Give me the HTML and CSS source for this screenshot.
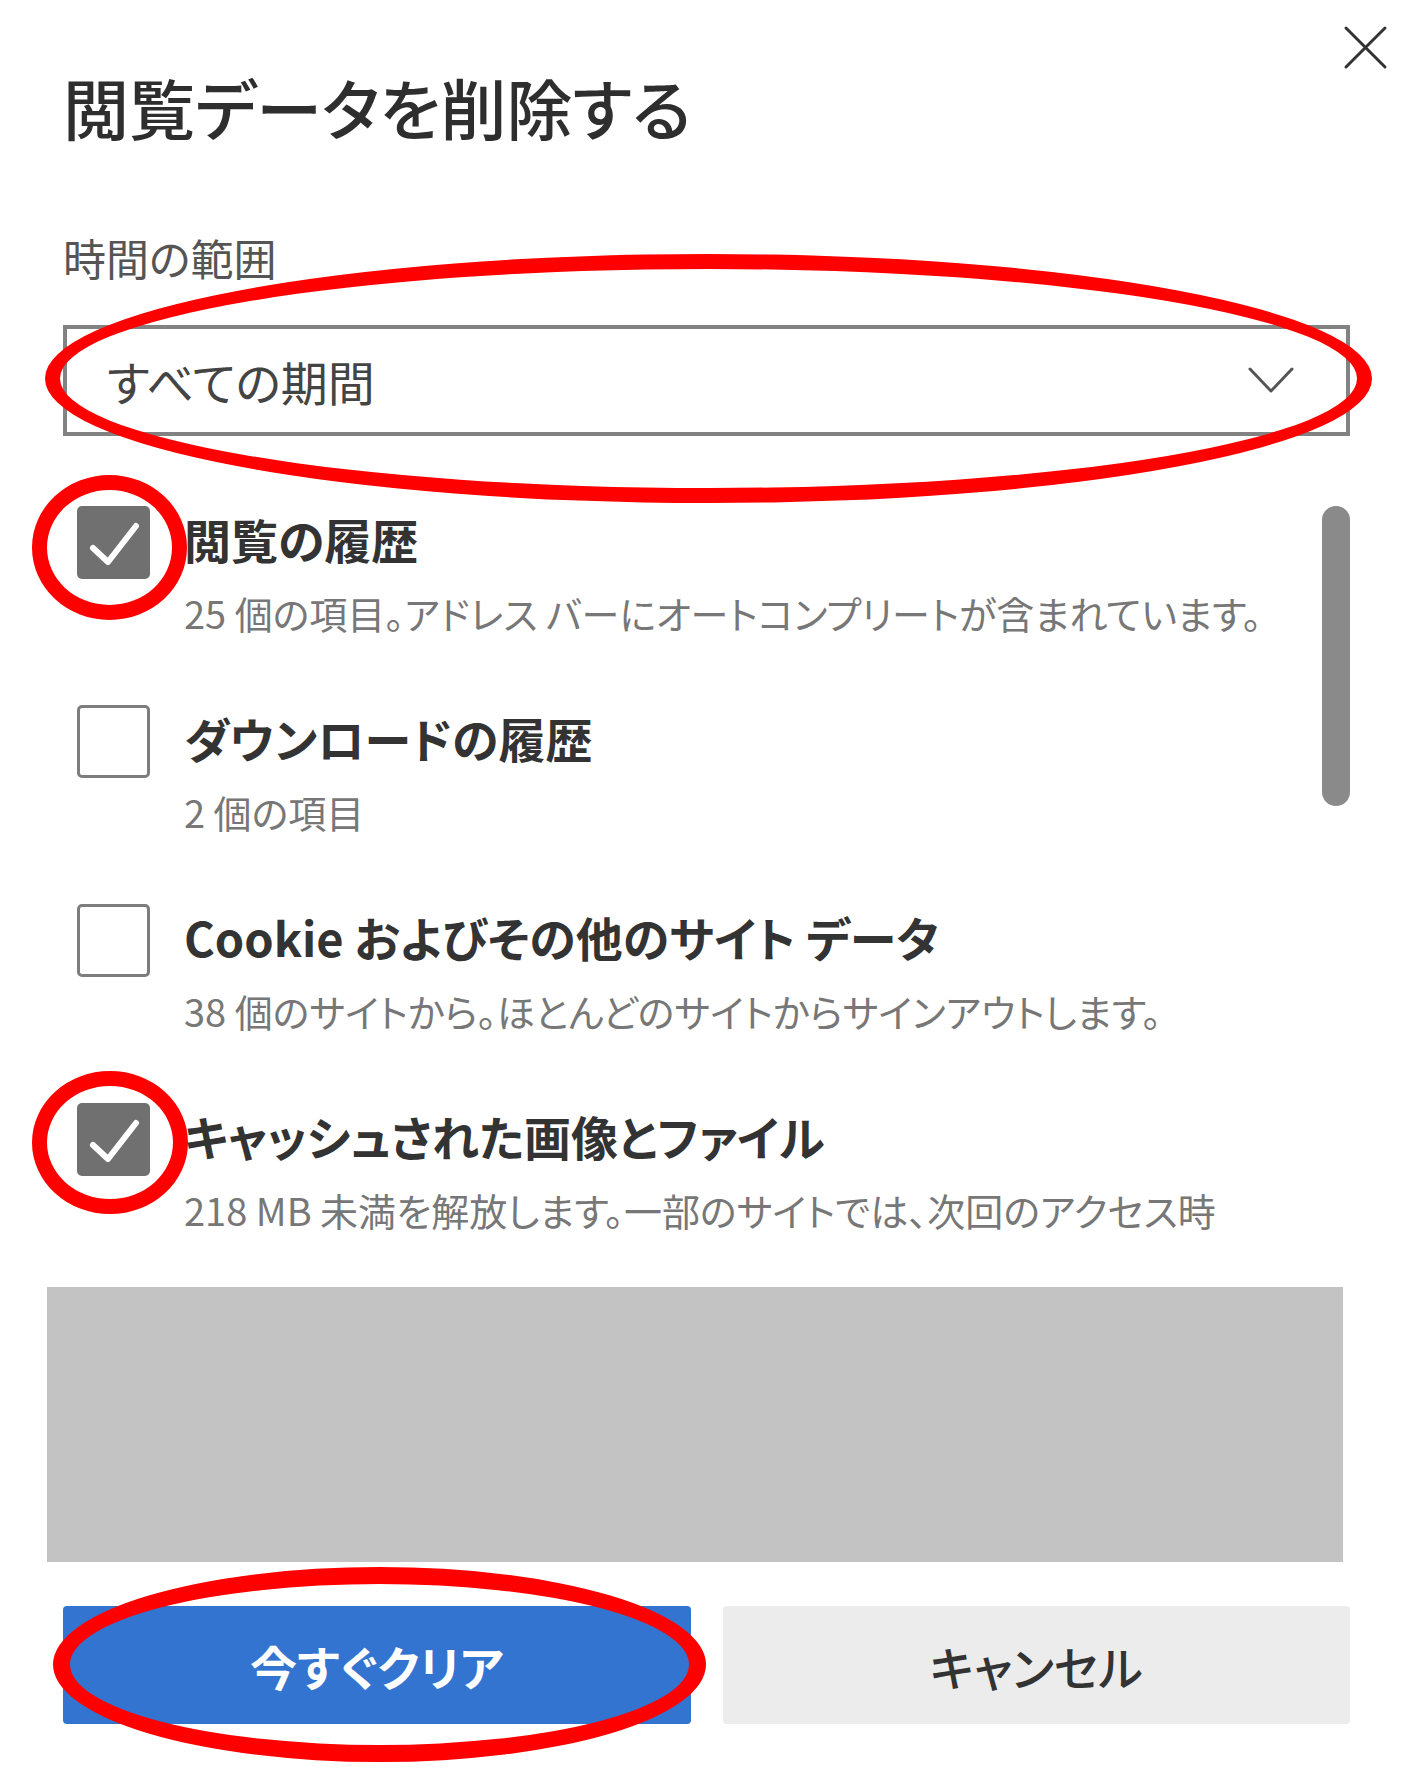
FILE: index.html
```html
<!DOCTYPE html>
<html lang="ja">
<head>
<meta charset="utf-8">
<title>閲覧データを削除する</title>
<link rel="stylesheet" href="styles.css">
</head>
<body>
<div class="dialog">
  <header class="header">
    <h1 class="title">閲覧データを削除する</h1>
    <button class="close" aria-label="閉じる">
      <svg viewBox="0 0 45 45" width="45" height="45"><path d="M3 3 L42 42 M42 3 L3 42" stroke="#333" stroke-width="3" fill="none" stroke-linecap="round"/></svg>
    </button>
  </header>

  <div class="label">時間の範囲</div>
  <div class="select">
    <span class="select-text">すべての期間</span>
    <svg class="chevron" viewBox="0 0 46 27" width="46" height="27"><path d="M2 2 L23 24 L44 2" stroke="#555" stroke-width="3" fill="none" stroke-linecap="round" stroke-linejoin="round"/></svg>
  </div>

  <div class="scroll-area">
    <div class="items">
      <div class="item">
        <span class="cb checked"><svg viewBox="0 0 73 73" width="73" height="73"><path d="M16 42 L31 56 L59 20" stroke="#fff" stroke-width="6" fill="none" stroke-linecap="round" stroke-linejoin="round"/></svg></span>
        <div class="item-text">
          <div class="item-title">閲覧の履歴</div>
          <div class="item-desc">25 個の項目。アドレス バーにオートコンプリートが含まれています。</div>
        </div>
      </div>
      <div class="item">
        <span class="cb"></span>
        <div class="item-text">
          <div class="item-title">ダウンロードの履歴</div>
          <div class="item-desc">2 個の項目</div>
        </div>
      </div>
      <div class="item">
        <span class="cb"></span>
        <div class="item-text">
          <div class="item-title">Cookie およびその他のサイト データ</div>
          <div class="item-desc">38 個のサイトから。ほとんどのサイトからサインアウトします。</div>
        </div>
      </div>
      <div class="item">
        <span class="cb checked"><svg viewBox="0 0 73 73" width="73" height="73"><path d="M16 42 L31 56 L59 20" stroke="#fff" stroke-width="6" fill="none" stroke-linecap="round" stroke-linejoin="round"/></svg></span>
        <div class="item-text">
          <div class="item-title">キャッシュされた画像とファイル</div>
          <div class="item-desc">218 MB 未満を解放します。一部のサイトでは、次回のアクセス時</div>
        </div>
      </div>
    </div>
    <div class="scrollbar"><div class="thumb"></div></div>
  </div>

  <div class="gray-block"></div>

  <div class="actions">
    <button class="btn primary">今すぐクリア</button>
    <button class="btn secondary">キャンセル</button>
  </div>
</div>

<div class="mark mark-select"></div>
<div class="mark mark-cb1"></div>
<div class="mark mark-cb4"></div>
<div class="mark mark-btn"></div>
</body>
</html>
```

FILE: styles.css
```css
* { box-sizing: border-box; }

html, body {
  margin: 0;
  padding: 0;
  background: #ffffff;
}

body {
  position: relative;
  width: 1420px;
  height: 1782px;
  overflow: hidden;
  font-family: "Noto Sans CJK JP", "Noto Sans", sans-serif;
  font-feature-settings: "palt";
  color: #333;
}

.dialog {
  padding: 25px 70px 0 63px;
}

.header {
  display: flex;
  justify-content: space-between;
  align-items: flex-start;
}

.title {
  margin: 38px 0 0 0;
  font-size: 66px;
  line-height: 86px;
  font-weight: 500;
  color: #2e2e2e;
}

.close {
  margin: 0 -38px 0 0;
  padding: 0;
  width: 45px;
  height: 45px;
  border: 0;
  background: transparent;
  display: flex;
}

.label {
  margin-top: 80px;
  font-size: 43px;
  line-height: 56px;
  color: #555;
}

.select {
  margin-top: 40px;
  height: 111px;
  border: 4px solid #828282;
  display: flex;
  align-items: center;
  justify-content: space-between;
  padding: 0 52px 0 40px;
}

.select-text {
  font-size: 47px;
  line-height: 62px;
  color: #444;
}

.chevron { display: block; }

.scroll-area {
  margin-top: 70px;
  display: flex;
  justify-content: space-between;
  align-items: flex-start;
}

.items {
  flex: 1;
  min-width: 0;
  padding-left: 14px;
  display: flex;
  flex-direction: column;
  gap: 68px;
}

.item {
  display: flex;
  align-items: flex-start;
  gap: 34px;
}

.cb {
  flex: none;
  width: 73px;
  height: 73px;
  border-radius: 5px;
  border: 3px solid #7d7d7d;
  background: #fff;
  display: flex;
}

.cb.checked {
  border: 0;
  background: #707070;
}

.item-text {
  min-width: 0;
}

.item-title {
  font-size: 47px;
  line-height: 66px;
  font-weight: 700;
  color: #333;
  white-space: nowrap;
}

.item-desc {
  margin-top: 17px;
  font-size: 38px;
  line-height: 48px;
  color: #777;
  white-space: nowrap;
}

.scrollbar {
  flex: none;
  width: 28px;
}

.thumb {
  height: 300px;
  border-radius: 14px;
  background: #8a8a8a;
}

.gray-block {
  margin: 53px 0 0 -16px;
  width: 1296px;
  height: 275px;
  background: #c3c3c3;
}

.actions {
  margin-top: 44px;
  display: grid;
  grid-template-columns: 1fr 1fr;
  gap: 32px;
}

.btn {
  height: 118px;
  border: 0;
  border-radius: 4px;
  font-family: "Noto Sans CJK JP", "Noto Sans", sans-serif;
  font-feature-settings: "palt";
  font-size: 47px;
  font-weight: 700;
  padding: 0;
}

.btn.primary {
  background: #3374d0;
  color: #ffffff;
}

.btn.secondary {
  background: #ececec;
  color: #333;
  font-weight: 500;
}

.mark {
  position: absolute;
  border: 15px solid #ff0000;
  border-radius: 50%;
  pointer-events: none;
}

.mark-select { left: 45px; top: 254px; width: 1327px; height: 249px; }
.mark-cb1 { left: 32px; top: 475px; width: 155px; height: 145px; }
.mark-cb4 { left: 32px; top: 1071px; width: 156px; height: 143px; }
.mark-btn { left: 53px; top: 1567px; width: 653px; height: 195px; border-width: 17px; }
```
